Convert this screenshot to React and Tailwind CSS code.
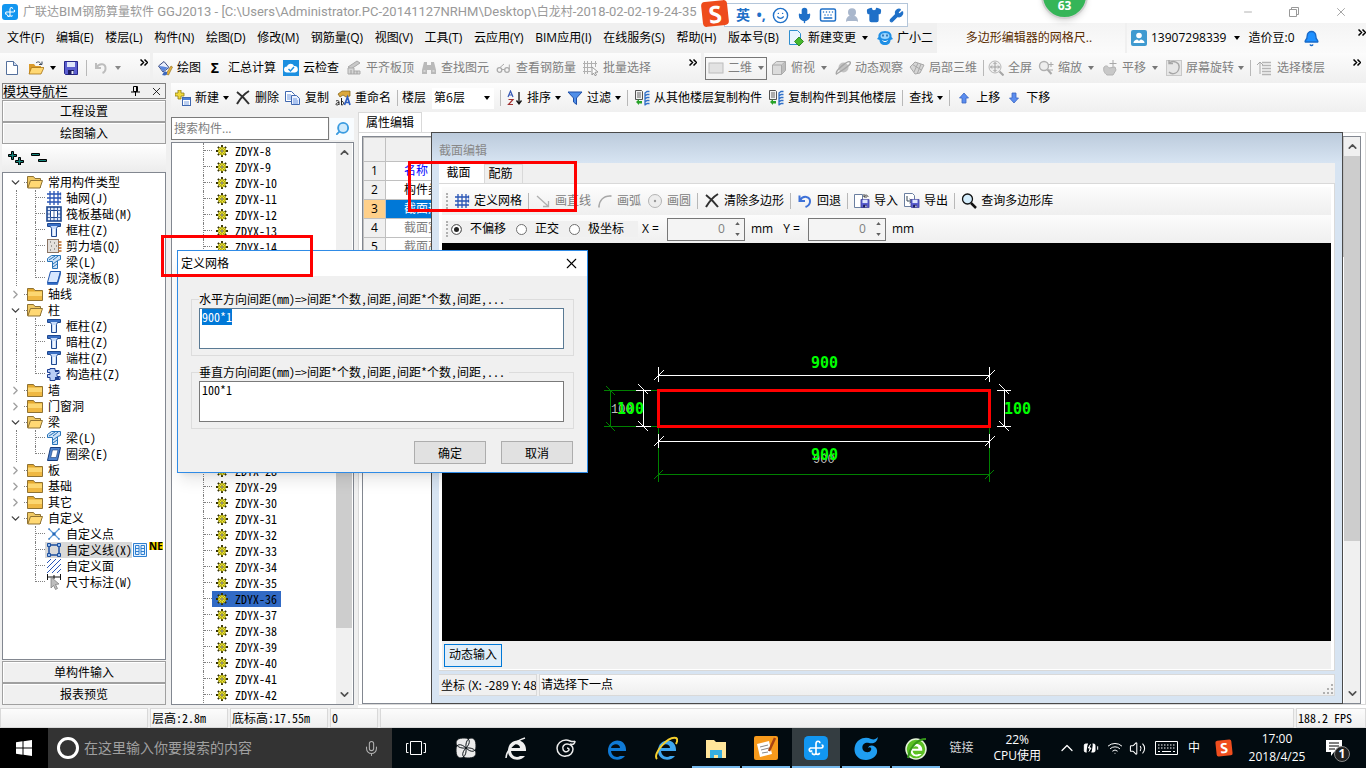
import { useEffect, useRef } from 'react'
import {
  ChevronDown, ChevronUp, ChevronRight, Keyboard, Mic, Minus, Shirt, Smile,
  Wrench, X, Search, Volume2, Wifi, Bell, BatteryCharging, UserRound,
} from 'lucide-react'

/* ---------- small drawings, all on a 16x16 grid ---------- */

function Svg({ children, size = 'h-4 w-4' }) {
  return (
    <svg viewBox="0 0 16 16" className={`${size} shrink-0`} fill="none" aria-hidden>
      {children}
    </svg>
  )
}

const floppy = (
  <>
    <path d="M1.5 1.5h13v13h-12l-1-1z" fill="#5b5fd0" stroke="#26268a" />
    <path d="M4 2h8v5H4z" fill="#dfe6fb" />
    <path d="M5 10h6v4.5H5z" fill="#1c1c60" />
    <path d="M8.5 11h2v3h-2z" fill="#e8ecff" />
  </>
)

const ICONS = {
  app: (
    <>
      <rect width="16" height="16" rx="3" fill="#1296f0" />
      <path d="M8 11.5V5.2C8 3 10.6 3 10.6 4.8M4 8h7.500M4 8c-1.300 1.800.5 3 1.400 1.700M11.500 8c1.500-.2 1.500-2 .2-2M8 11.500c-.8 1.500-2.600 1-2.500-.5M8 11.500c.8 1.300 2.300.9 2.300-.3" stroke="#fff" strokeWidth="1.100" />
    </>
  ),
  file: (
    <>
      <path d="M2.5 1.500h7l4 4v9h-11z" fill="#fff" stroke="#54709c" />
      <path d="M9.500 1.500v4h4" fill="#cfdcf2" stroke="#54709c" />
    </>
  ),
  open: (
    <>
      <path d="M1 4h5l1.5 2H13v8H1z" fill="#d99a2b" />
      <path d="M3.5 7.5H16L13 14H1z" fill="#ffd873" stroke="#a87414" strokeWidth=".8" />
      <path d="M8 3c2-2 4-1 5 1m1-2.500v3h-3" stroke="#3d4a5c" />
    </>
  ),
  save: floppy,
  undoGray: <path d="M3 3v5h5M3.5 7.5C6 3 13 3 12.5 9c-.2 2-1.500 3.500-3 4" stroke="#bdbdbd" strokeWidth="2" />,
  draw: (
    <>
      <path d="M1.5 6L7 1.5l5 6L6 12z" fill="#e9eefb" stroke="#3a4a80" />
      <path d="M2 6l4 .5 5 1-5 4z" fill="#5a86dd" />
      <path d="M9 14l5-8 1.5 1-4 8z" fill="#e8b53b" stroke="#8c6410" strokeWidth=".6" />
      <path d="M7 12c2-1 4 0 3 2s-3 1.500-5 1c1-1 1-2 2-3z" fill="#3e68bd" />
    </>
  ),
  cloud: (
    <>
      <rect width="16" height="16" fill="#1b8fe0" />
      <path d="M4 12.500a3 3 0 010-6C5 3 10 3 11 6a3 3 0 011 6.500z" fill="#fff" />
      <path d="M5.500 9l2 2 3.500-4" stroke="#1b8fe0" strokeWidth="1.500" />
    </>
  ),
  flush: (
    <>
      <path d="M2 7l9-6 3 2-9 6z" fill="#c9c9c9" stroke="#a8a8a8" />
      <path d="M2 8v6h12v-3H8V8z" fill="#d6d6d6" stroke="#ababab" />
      <path d="M5 10v4M8 11v3M11 11v3" stroke="#a0a0a0" />
    </>
  ),
  binoculars: (
    <>
      <path d="M3 2h3v3h4V2h3l2 8v4h-5v-4H6v4H1v-4z" fill="#b9b9b9" />
      <path d="M2.500 11h2M11.500 11h2" stroke="#eee" />
    </>
  ),
  glasses: (
    <>
      <circle cx="3.500" cy="10" r="2.300" stroke="#ababab" strokeWidth="1.300" />
      <circle cx="11" cy="10" r="2.300" stroke="#ababab" strokeWidth="1.300" />
      <path d="M6 9.500h2.500M4 7.500l4-3.500M13.300 9.500V4.500" stroke="#ababab" />
    </>
  ),
  batch: (
    <>
      <path d="M1.500 1v13M4.500 1v13M8.500 1v6M12.500 1v6M0 3.500h14M0 7.500h9M0 11.500h8" stroke="#b0b0b0" />
      <path d="M9 7l6 5-3 .3 1.500 2.700-1.500.7L10.500 13 9 15z" fill="#fff" stroke="#999" />
    </>
  ),
  plane2d: <rect x="1" y="3" width="14" height="10" fill="#e2e2e2" stroke="#bcbcbc" />,
  cube: (
    <>
      <path d="M1.500 5l4-3.500h9v9l-4 4h-9z" fill="#dcdcdc" stroke="#aaa" />
      <path d="M1.500 5h9v9.500M10.500 5l4-3.500" stroke="#aaa" />
      <path d="M11 5.500l3-3v8l-3 3z" fill="#bdbdbd" />
    </>
  ),
  orbit: (
    <>
      <circle cx="8.500" cy="7.500" r="5" fill="#c2c2c2" />
      <path d="M1.500 14C-.5 11 13 0 15 2s-4 6-13.500 12z" stroke="#a6a6a6" strokeWidth="1.400" />
    </>
  ),
  part3d: (
    <>
      <path d="M1 7l5-5 9 3-4 8-5 1z" fill="#d5d5d5" stroke="#a8a8a8" />
      <path d="M3.500 4.500l9 5.500M9 3l-4 9M12 4l-3.500 9" stroke="#a8a8a8" />
    </>
  ),
  fit: (
    <>
      <circle cx="7" cy="7" r="6" fill="#eee" stroke="#b8b8b8" />
      <path d="M7 2.500v9M2.500 7h9M5.500 4L7 2.500 8.500 4M5.500 10L7 11.500 8.500 10M4 5.500L2.500 7 4 8.500M10 5.500L11.500 7 10 8.500" stroke="#a0a0a0" />
      <path d="M11.500 11.500l4 4" stroke="#a6a6a6" strokeWidth="2" />
    </>
  ),
  zoom: (
    <>
      <circle cx="6" cy="6" r="4.500" fill="#eee" stroke="#b0b0b0" strokeWidth="1.400" />
      <path d="M9.500 9.500l4 4.500" stroke="#aaa" strokeWidth="2" />
      <path d="M13 2v5M10.500 4.500h5M11 10h4" stroke="#aaa" />
    </>
  ),
  pan: (
    <>
      <path d="M2 7c2-2 4-1 5 1l6-1 1 3-3 5H5c-3-2-4-5-3-8z" fill="#c8c8c8" stroke="#b3b3b3" />
      <path d="M11 0v7M7.500 3.500h7" stroke="#a8a8a8" />
    </>
  ),
  rotate: (
    <>
      <rect x=".5" y=".5" width="15" height="15" fill="#e6e6e6" stroke="#c8c8c8" />
      <path d="M3 3c4-3 11-1 10 5s-7 7-10 4M3 0v3.500h4" stroke="#a6a6a6" strokeWidth="1.400" />
    </>
  ),
  floors: (
    <>
      <path d="M5 2.500h9M5 5.500h9M5 8.500h9M5 11.500h9M5 14.500h9" stroke="#b5b5b5" strokeWidth="1.500" />
      <path d="M0 5l3-3 3 3M3 3v11" stroke="#a8a8a8" />
    </>
  ),
  add: (
    <>
      <path d="M3 0h3v3h3v3H6v3H3V6H0V3h3z" fill="#f0d93c" stroke="#8d7b12" strokeWidth=".8" />
      <rect x="7.500" y="7.500" width="8" height="8" fill="#fff" stroke="#4068b0" />
      <path d="M8 8h7v2H8z" fill="#4d80d8" />
      <path d="M9 12h5M9 14h5" stroke="#7ba0e0" />
    </>
  ),
  del: <path d="M2 2c4 3 8 7 12 12M14 1C9 4 5 9 2 14" stroke="#303030" strokeWidth="2" />,
  copy: (
    <>
      <path d="M.5 1.500h6l3 3v7h-9z" fill="#fff" stroke="#4068b0" />
      <path d="M2 5h4M2 7h4M2 9h4" stroke="#6b95e0" />
      <path d="M6.500 5.500h5l3 3v6h-8z" fill="#eaf1ff" stroke="#4068b0" />
      <path d="M8 9h4M8 11h5M8 13h5" stroke="#6b95e0" />
    </>
  ),
  rename: (
    <>
      <path d="M3 4l4-3h8v5l-4 1-3-2-3 2z" fill="#dba83c" stroke="#7b5b13" strokeWidth=".7" />
      <path d="M1 11c2-1 3 0 3 1v3M4 12.500c-3 0-4 2.500-2 2.500 1 0 2-1 2-1M6.500 8v7c3 0 3-4 0-3.500" stroke="#222" />
      <path d="M9.500 15l3-8 2.500 8M10.500 12.500h4" stroke="#2d5dc0" strokeWidth="1.700" />
    </>
  ),
  sort: (
    <>
      <path d="M1 7l2.500-6L6 7M2 5h3" stroke="#3558b5" strokeWidth="1.200" />
      <path d="M1.500 9.500H6l-4.500 5H6" stroke="#a03030" strokeWidth="1.200" />
      <path d="M12 2v11M9.500 10.500L12 14l2.500-3.500" stroke="#111" strokeWidth="1.300" />
    </>
  ),
  filter: <path d="M1 2h14L9.500 8v6.500L6.500 12V8z" fill="#4f8ee8" stroke="#1e4fa8" />,
  floorCopy: (
    <>
      <path d="M1.500.5h6l1 1v8h-7z" fill="#f2f2f2" stroke="#555" />
      <path d="M3 3h4M3 5h4M3 7h4" stroke="#666" />
      <path d="M11 3l2-1.500h2.500M11 6l2-1.500h2.500M11 9l2-1.500h2.500M11 12l2-1.500h2.500M11 15l2-1.500h2.500M11 2.500v13" stroke="#2f6fc8" strokeWidth="1.300" />
      <path d="M2 12l3-3v2h3v2.500H5V15z" fill="#29a329" />
    </>
  ),
  up: <path d="M8 3l4.500 5H10v5H6V8H3.500z" fill="#5b8def" stroke="#3a66c0" strokeWidth=".8" />,
  down: <path d="M8 13L3.500 8H6V3h4v5h2.500z" fill="#5b8def" stroke="#3a66c0" strokeWidth=".8" />,
  change: (
    <>
      <path d="M1.500.5h8l3 3v11h-11z" fill="#eaf5ff" stroke="#2f8ecf" />
      <path d="M11 7l4.500 4.500L11 16l-4.500-4.500z" fill="#46b82d" stroke="#1f7a12" strokeWidth=".8" />
    </>
  ),
  mascot: (
    <>
      <path d="M8 1c5 0 7 3 6.500 6l1.500 2-2.500 1c0 3-2 5-5.500 5s-5.500-2-5.500-5L0 9l1.500-2C1 4 3 1 8 1z" fill="#1f8fe5" />
      <ellipse cx="8" cy="6" rx="4.500" ry="3" fill="#9ad6ff" />
      <path d="M6 4.500v2M10 4.500v2" stroke="#0b4d91" strokeWidth="1.300" />
      <path d="M5.500 10.500c1.500 1.500 3.500 1.500 5 0" stroke="#fff" />
    </>
  ),
  user: (
    <>
      <rect width="16" height="16" rx="2" fill="#3f9ad0" />
      <circle cx="8" cy="5.500" r="2.800" fill="#fff" />
      <path d="M2.500 13c0-5 11-5 11 0z" fill="#fff" />
      <path d="M6 9h4l-2 2z" fill="#3f9ad0" />
    </>
  ),
  folder: (
    <>
      <path d="M.5 2.500h6l1.500 2h7.500v10H.5z" fill="#e3a92f" stroke="#8f7233" />
      <path d="M1 5.500h14V14H1z" fill="#fcd771" />
      <path d="M1 10h14v4H1z" fill="#efb843" />
    </>
  ),
  folderOpen: (
    <>
      <path d="M.5 2.500h6l1.500 2h5.500v9H.5z" fill="#f0c964" stroke="#8f7233" />
      <path d="M3.500 6.500h12L13 14H.8z" fill="#ffd873" stroke="#8f7233" />
    </>
  ),
  grid: <path d="M4 1v14M8 1v14M12 1v14M1 4h14M1 8h14M1 12h14M14.500 2.500v3M14.500 6.500v3" stroke="#2955b5" strokeWidth="1.300" />,
  raft: (
    <>
      <rect x="1" y="1" width="14" height="14" fill="#dfe9fb" stroke="#1d4790" strokeWidth="1.600" />
      <path d="M4.500 4.500h7v7h-7z" fill="#fff" stroke="#1d4790" />
      <path d="M8 4v8M1 4.500h3M1 8h3M1 11.500h3M12 4.500h3M12 8h3M12 11.500h3M4.500 1v3M8 1v3M11.500 1v3M4.500 12v3M8 12v3M11.500 12v3" stroke="#1d4790" strokeWidth=".8" />
    </>
  ),
  column: (
    <>
      <path d="M1.500 1.500h13v3h-3l-1 2v8h-5v-8l-1-2h-3z" fill="#c8dcfb" stroke="#1d4790" />
      <path d="M2 2h12v2H2z" fill="#3a6fc4" />
      <path d="M8 7v7" stroke="#fff" strokeWidth="1.500" />
    </>
  ),
  wall: (
    <>
      <rect x="1.500" y="1.500" width="11" height="13" fill="#e4e0dc" stroke="#8a7464" />
      <path d="M4 4h1M8 5h1M5 8h1M10 8h1M4 12h1M8 11h1" stroke="#555" />
      <path d="M12.500 4h3M12.500 7h3M12.500 10h3M12.500 13h3" stroke="#c06a22" strokeWidth="1.500" />
    </>
  ),
  beam: (
    <>
      <path d="M1.500 4.500l4-3h9v4l-3 1v8h-5v-7h-5z" fill="#cfe3f8" stroke="#2673b8" />
      <path d="M3 6l6-4M7 6l5-4M7 10l4-3M7 13l4-3" stroke="#2673b8" />
    </>
  ),
  slab: (
    <>
      <path d="M4.500 1.500h10l-3 11h-10z" fill="#d7e7ff" stroke="#1f55ad" />
      <path d="M1.500 12.500h10l3-11v3l-3 10h-10z" fill="#2c69c8" stroke="#1f55ad" strokeWidth=".6" />
    </>
  ),
  ring: (
    <>
      <path d="M4.500 1.500h10l-3 13h-10z" fill="#4d83cf" stroke="#173c7b" />
      <path d="M6.500 4H12l-1.800 7.500H4.700z" fill="#fff" stroke="#173c7b" strokeWidth=".6" />
    </>
  ),
  tie: (
    <>
      <path d="M4 2.500h5v2h4v3h-2v3h3v3H9v1H4v-3H1.500v-3H4v-2H1.500v-3H4z" fill="#b9cdf5" stroke="#1d3f92" />
      <path d="M9 5h3M9 12h4" stroke="#1d3f92" strokeWidth="2" />
    </>
  ),
  point: (
    <>
      <path d="M3 3l10 10M3 13L13 3" stroke="#5a9ad8" strokeWidth="1.200" />
      <path d="M2 3h2M12 3h2M2 13h2M12 13h2" stroke="#2468b8" />
      <rect x="6.500" y="6.500" width="3" height="3" fill="#2468b8" />
    </>
  ),
  line: (
    <>
      <path d="M3 3h10v10H3z" stroke="#1d4f9f" strokeWidth="1.500" />
      <path d="M1.500 1.500h3v3h-3zM11.500 1.500h3v3h-3zM1.500 11.500h3v3h-3zM11.500 11.500h3v3h-3z" fill="#9cc2f0" stroke="#1d4f9f" />
    </>
  ),
  face: <path d="M1 5l4-4M1 10l9-9M1 15L15 1M6 15l9-9M11 15l4-4" stroke="#2955b5" />,
  dim: (
    <>
      <path d="M1 3h14M1.500 0v6M14.500 0v6M8 1v4" stroke="#111" />
      <path d="M5 3l8 7-3.500.5 2 4-2 1-2-4L5 14z" fill="#bdbdbd" stroke="#777" strokeWidth=".7" />
    </>
  ),
  gear: (
    <>
      <path d="M8 0v16M0 8h16M2.500 2.500l11 11M13.500 2.500l-11 11" stroke="#333000" strokeWidth="2.500" />
      <circle cx="8" cy="8" r="5.500" fill="#f4ec2c" />
      <circle cx="8" cy="8" r="4.300" stroke="#55500a" strokeWidth="1.300" strokeDasharray="2 1.400" />
      <circle cx="8" cy="8" r="1.600" fill="#fff" stroke="#333000" />
    </>
  ),
  lineTool: <path d="M2 3l11 10M13.500 8v5.500H8" stroke="#b0b0b0" strokeWidth="1.300" />,
  arc: (
    <>
      <path d="M2 14C2 8 6 3 13 3" stroke="#a8a8a8" strokeWidth="1.300" />
      <path d="M1 12.500h2v2H1zM12.500 2h2v2h-2z" fill="#b5b5b5" />
    </>
  ),
  circle: (
    <>
      <circle cx="8" cy="8" r="6.500" fill="#ededed" stroke="#b4b4b4" />
      <circle cx="8" cy="8" r="1.200" fill="#999" />
    </>
  ),
  undo: <path d="M2.500 2.500v5.500H8M3 7.500C6 2 13.500 3 13 9c-.3 2.500-2 4-4.500 5" stroke="#3f72d8" strokeWidth="2" />,
  imp: (
    <>
      <path d="M.5 1.500h8v13h-8z" fill="#fff" stroke="#6a7ea0" />
      <path d="M10 4c1-3 4-2 4 0M10 1v3h3" stroke="#444" />
      <svg x="6" y="5.500" width="10" height="10" viewBox="0 0 16 16">{floppy}</svg>
    </>
  ),
  exp: (
    <>
      <path d="M.5.5h8l2 2v11H.5z" fill="#fff" stroke="#6a7ea0" />
      <path d="M3 3v5h4M5.500 6L8 8l-2.500 2" stroke="#345" />
      <svg x="6" y="5.500" width="10" height="10" viewBox="0 0 16 16">{floppy}</svg>
    </>
  ),
  query: (
    <>
      <circle cx="6.500" cy="6" r="5" fill="#d3ecfb" stroke="#111" strokeWidth="1.300" />
      <path d="M10 10l5 5" stroke="#111" strokeWidth="2.500" />
    </>
  ),
}

function Icon({ name, size }) {
  return <Svg size={size}>{ICONS[name]}</Svg>
}

function Caret({ className = 'text-black' }) {
  return (
    <svg viewBox="0 0 6 4" className={`h-1 w-1.5 shrink-0 ${className}`} aria-hidden>
      <path d="M0 0h6L3 4z" fill="currentColor" />
    </svg>
  )
}

function Sep() {
  return <span className="h-4 w-px shrink-0 bg-[#b8b8b8]" />
}

function Tool({ icon, label, muted, caret }) {
  return (
    <button type="button" className={`flex shrink-0 items-center gap-1 ${muted ? 'text-[#808080]' : 'text-black'}`}>
      {icon && <Icon name={icon} />}
      <span>{label}</span>
      {caret && <Caret className={muted ? 'text-[#777]' : 'text-black'} />}
    </button>
  )
}

function More() {
  return (
    <svg viewBox="0 0 8 7" className="mt-[6px] h-[7px] w-2 shrink-0 self-start" fill="none" stroke="#000" strokeWidth="1.500" aria-hidden>
      <path d="M.5.500l3 3-3 3M4.500.500l3 3-3 3" />
    </svg>
  )
}

/* ---------- title and menus ---------- */

const MENUS = [
  '文件(F)', '编辑(E)', '楼层(L)', '构件(N)', '绘图(D)', '修改(M)', '钢筋量(Q)', '视图(V)',
  '工具(T)', '云应用(Y)', 'BIM应用(I)', '在线服务(S)', '帮助(H)', '版本号(B)',
]

function TitleBar() {
  return (
    <header className="flex h-[23px] shrink-0 items-center bg-white pl-0.5 text-[#999]">
      <Icon name="app" />
      <h1 className="ml-[5px] flex-1 overflow-hidden [font-family:Roboto,'Noto_Sans_CJK_SC',sans-serif] text-[13px] leading-5 whitespace-nowrap">
        <span className="text-xs">广联达</span>BIM<span className="text-xs">钢筋算量软件</span>
        {' GGJ2013 - [C:\\Users\\Administrator.PC-20141127NRHM\\Desktop\\'}
        <span className="text-xs">白龙村</span>-2018-02-02-19-24-35
      </h1>
      <div className="flex items-center gap-[34px] pr-[18px]">
        <button type="button" aria-label="最小化"><Minus size={12} strokeWidth={1.5} /></button>
        <button type="button" aria-label="还原">
          <svg viewBox="0 0 12 12" className="h-3 w-3" fill="none" stroke="currentColor">
            <path d="M3.500 3V1.500h7v7H9M1.500 3.500h7v7h-7z" />
          </svg>
        </button>
        <button type="button" aria-label="关闭"><X size={14} strokeWidth={1.5} /></button>
      </div>
    </header>
  )
}

function MenuBar() {
  return (
    <nav className="flex h-[30px] shrink-0 items-center bg-[#f0f0f0]">
      <div className="flex flex-1 items-center gap-[9px] pl-[7px]">
        <div className="flex w-[772px] shrink-0 justify-between">
          {MENUS.map((m) => <button key={m} type="button" className="shrink-0">{m}</button>)}
        </div>
        <button type="button" className="flex shrink-0 items-center gap-1">
          <Icon name="change" />新建变更<Caret className="ml-0.5 text-black" />
        </button>
        <Tool icon="mascot" label="广小二" />
      </div>
      <div className="flex h-full w-[188px] shrink-0 items-center justify-center bg-linear-to-b from-[#f4f4f4] to-[#fbfbfb] pr-1 text-[#5a2c00]">
        多边形编辑器的网格尺..
      </div>
      <div className="ml-0.5 flex h-full w-[239px] shrink-0 items-center gap-1 bg-linear-to-b from-[#f4f4f4] to-[#fbfbfb] pl-1">
        <Icon name="user" />
        <span>13907298339</span>
        <Caret className="mx-1 text-black" />
        <span>造价豆:0</span>
        <Bell size={17} className="ml-1 fill-[#1e90ff] text-[#1769c8]" />
        <span className="flex-1" />
        <More />
      </div>
    </nav>
  )
}

function MainToolbar() {
  return (
    <div className="flex h-[30px] shrink-0 gap-[3px] bg-[#f0f0f0]">
      <div className="flex w-[150px] shrink-0 items-center bg-linear-to-b from-[#fcfcfc] to-[#efefef] pl-1">
        <button type="button" aria-label="新建"><Icon name="file" /></button>
        <button type="button" aria-label="打开" className="ml-2 flex items-center gap-1.5"><Icon name="open" /><Caret /></button>
        <button type="button" aria-label="保存" className="mx-[7px]"><Icon name="save" /></button>
        <Sep />
        <button type="button" aria-label="撤销" className="ml-1.5 flex items-center gap-1.5">
          <Icon name="undoGray" /><Caret className="text-[#888]" />
        </button>
        <span className="flex-1" />
        <More />
        <span className="w-0.5" />
      </div>
      <div className="flex flex-1 items-center gap-[7px] bg-linear-to-b from-[#fcfcfc] to-[#efefef] pr-1 pl-1">
        <Tool icon="draw" label="绘图" />
        <button type="button" className="flex items-center gap-2 pl-0.5">
          <span className="w-2.5 text-sm leading-4 font-bold">Σ</span>汇总计算
        </button>
        <Tool icon="cloud" label="云检查" />
        <Tool icon="flush" label="平齐板顶" muted />
        <Tool icon="binoculars" label="查找图元" muted />
        <Tool icon="glasses" label="查看钢筋量" muted />
        <Tool icon="batch" label="批量选择" muted />
        <span className="flex-1" />
        <More />
      </div>
      <div className="flex w-[662px] shrink-0 items-center gap-[6px] bg-linear-to-b from-[#fcfcfc] to-[#efefef] pr-[5px] pl-px">
        <button type="button" className="-mr-0.5 flex h-[23px] w-[62px] shrink-0 items-center gap-1 border border-[#777] pl-0.5 text-[#808080]">
          <Icon name="plane2d" />二维<Caret className="ml-0.5 text-[#777]" />
        </button>
        <button type="button" className="flex items-center gap-1 text-[#808080]">
          <Icon name="cube" />俯视<Caret className="mx-0.5 text-[#777]" />
        </button>
        <Tool icon="orbit" label="动态观察" muted />
        <Tool icon="part3d" label="局部三维" muted />
        <Sep />
        <div className="-ml-0.5 flex items-center gap-[6px]">
          <Tool icon="fit" label="全屏" muted />
          <button type="button" className="flex items-center gap-1 text-[#808080]">
            <Icon name="zoom" />缩放<Caret className="mx-0.5 text-[#777]" />
          </button>
          <button type="button" className="flex items-center gap-1 text-[#808080]">
            <Icon name="pan" />平移<Caret className="mx-0.5 text-[#777]" />
          </button>
          <Tool icon="rotate" label="屏幕旋转" muted caret />
        </div>
        <Sep />
        <Tool icon="floors" label="选择楼层" muted />
        <span className="flex-1" />
        <More />
      </div>
    </div>
  )
}

/* ---------- left navigation ---------- */

const NAV = [
  { name: '常用构件类型', open: true, items: [['grid', '轴网(J)'], ['raft', '筏板基础(M)'], ['column', '框柱(Z)'], ['wall', '剪力墙(Q)'], ['beam', '梁(L)'], ['slab', '现浇板(B)']] },
  { name: '轴线' },
  { name: '柱', open: true, items: [['column', '框柱(Z)'], ['column', '暗柱(Z)'], ['column', '端柱(Z)'], ['tie', '构造柱(Z)']] },
  { name: '墙' },
  { name: '门窗洞' },
  { name: '梁', open: true, items: [['beam', '梁(L)'], ['ring', '圈梁(E)']] },
  { name: '板' },
  { name: '基础' },
  { name: '其它' },
  { name: '自定义', open: true, items: [['point', '自定义点'], ['line', '自定义线(X)'], ['face', '自定义面'], ['dim', '尺寸标注(W)']] },
]

const DOTS = 'border-dotted border-[#808080]'

function NavLeaf({ icon, label, last, tail }) {
  const active = label === '自定义线(X)'
  return (
    <li className="flex h-4 items-center">
      <span className={`ml-[13px] w-[19px] self-stretch ${tail ? '' : `border-l ${DOTS}`}`} />
      <span className={`w-[10px] shrink-0 self-stretch ${last ? '' : `border-l ${DOTS}`}`}>
        <span className={`block h-2 border-b ${last ? 'border-l' : ''} ${DOTS}`} />
      </span>
      <span className={`flex h-4 items-center gap-1 pl-px ${active ? 'bg-[#d9d9d9]' : ''}`}>
        <Icon name={icon} />{label}
      </span>
      {active && (
        <>
          <svg viewBox="0 0 14 14" className="ml-px h-3.5 w-3.5 shrink-0" fill="none" stroke="#2f7fd0" aria-hidden>
            <path d="M.5.5h13v13H.5z" fill="#e5f2ff" />
            <path d="M2.500 2.500h3.500v9H2.500zM8 2.500h3.500v9H8zM2.500 5.500H6M2.500 8.500H6M8 5.500h3.500M8 8.500h3.500" />
          </svg>
          <span className="ml-0.5 self-start bg-[#ffd800] font-sans text-[10px] leading-2 font-bold">NE</span>
        </>
      )}
    </li>
  )
}

const BAR_BTN = 'h-[22px] w-full shrink-0 border border-[#a0a0a0] bg-[#f0f0f0] shadow-[inset_1px_1px_0_#fff]'

function NavPanel() {
  return (
    <aside className="[font-family:'Noto_Sans_CJK_SC',sans-serif] [font-feature-settings:'hwid'] flex w-[167px] shrink-0 flex-col pr-px pb-[3px] pl-0.5">
      <div className="flex h-[16px] shrink-0 items-center border border-[#808080] pr-0.5">
        <h2 className="flex-1 text-[13px] leading-3">模块导航栏</h2>
        <svg viewBox="0 0 9 10" className="mr-2.5 h-2.5 w-[9px]" fill="none" stroke="#000" aria-label="固定">
          <path d="M2.500.500h4v5h-4zM5.500 1v4M0 6h9M4.500 6v4" />
        </svg>
        <X size={13} strokeWidth={1.5} />
      </div>
      <button type="button" className={`mt-px ${BAR_BTN}`}>工程设置</button>
      <button type="button" className={BAR_BTN}>绘图输入</button>
      <div className="flex h-7 shrink-0 items-center bg-linear-to-b from-white to-[#ececec] pl-[6px]">
        <button type="button" aria-label="全部展开">
          <svg viewBox="0 0 40 14" className="h-3.5 w-10" aria-hidden>
            <path d="M3.500.500h2v3h3v2h-3v3h-2v-3h-3v-2h3zM10.500 6.500h2v3h3v2h-3v2.500h-2v-2.500h-3v-2h3zM23.500 2.500h8v2h-8zM30.500 8.500h8v2h-8z" fill="#15847c" stroke="#000" />
          </svg>
        </button>
      </div>
      <ul className="min-h-0 flex-1 overflow-hidden border border-[#828790] bg-white pt-px">
        {NAV.map((group, gi) => (
          <li key={group.name}>
            <div className="flex h-4 items-center">
              <span className="flex w-[21px] justify-end pr-[2px]">
                {group.open
                  ? <ChevronDown size={13} strokeWidth={2.5} className="text-[#404040]" />
                  : <ChevronRight size={13} strokeWidth={2.5} className="text-[#a0a0a0]" />}
              </span>
              <span className={`w-[3px] border-t ${DOTS}`} />
              <Icon name={group.open ? 'folderOpen' : 'folder'} />
              <span className="ml-[5px]">{group.name}</span>
            </div>
            {group.items && (
              <ul>
                {group.items.map(([icon, label], i) => (
                  <NavLeaf key={label} icon={icon} label={label} last={i === group.items.length - 1} tail={gi === NAV.length - 1} />
                ))}
              </ul>
            )}
          </li>
        ))}
      </ul>
      <button type="button" className={`mt-px ${BAR_BTN}`}>单构件输入</button>
      <button type="button" className={BAR_BTN}>报表预览</button>
    </aside>
  )
}

/* ---------- component list ---------- */

function Scrollbar({ children }) {
  return (
    <div className="flex w-4 shrink-0 flex-col items-center bg-[#f0f0f0] text-[#505050]">
      <ChevronUp size={13} strokeWidth={3} className="my-[3px] shrink-0" />
      <div className="flex w-full flex-1 flex-col">{children}</div>
      <ChevronDown size={13} strokeWidth={3} className="my-[3px] shrink-0" />
    </div>
  )
}

const PARTS = Array.from({ length: 35 }, (_, i) => `ZDYX-${i + 8}`)

function PartList() {
  return (
    <section className="flex w-[183px] shrink-0 flex-col pt-[5px] pb-[3px]">
      <div className="mb-0.5 flex h-[23px] shrink-0 items-center">
        <input
          aria-label="搜索构件"
          placeholder="搜索构件..."
          className="h-[23px] w-[158px] border border-[#7a7a7a] bg-white px-0.5 text-xs placeholder:text-[#808080]"
        />
        <button type="button" aria-label="搜索" className="ml-px grid h-[22px] w-6 place-items-center bg-[#f8fcff] text-[#3a9be0]">
          <Search size={15} strokeWidth={3} className="-scale-x-100 fill-[#cfeafc]" />
        </button>
      </div>
      <div className="flex min-h-0 flex-1 border border-[#828790] bg-white pr-px">
        <ul className="[font-family:'Noto_Sans_CJK_SC',sans-serif] [font-feature-settings:'hwid'] min-w-0 flex-1 overflow-hidden">
          {PARTS.map((p) => (
            <li key={p} className="flex h-4 items-center pl-[31px]">
              <span className={`w-[9px] self-stretch border-l ${DOTS}`}>
                <span className={`block h-2 border-b ${DOTS}`} />
              </span>
              <span className={`flex h-4 items-center gap-[7px] pr-1 pl-[4px] ${p === 'ZDYX-36' ? 'bg-[#316ac5]' : ''}`}>
                <Icon name="gear" size="h-3 w-3" />{p}
              </span>
            </li>
          ))}
        </ul>
        <Scrollbar>
          <span className="grow-[48]" />
          <span className="grow-[42] bg-[#cdcdcd]" />
          <span className="grow-[11]" />
        </Scrollbar>
      </div>
    </section>
  )
}

function PartToolbar() {
  return (
    <div className="flex h-7 shrink-0 items-center gap-[6px] bg-linear-to-b from-[#fdfdfd] to-[#f0f0f0] pt-0.5 pl-1">
      <Tool icon="add" label="新建" caret />
      <Tool icon="del" label="删除" />
      <Tool icon="copy" label="复制" />
      <Tool icon="rename" label="重命名" />
      <Sep />
      <label className="-ml-0.5 flex items-center gap-1.5">
        楼层
        <span className="flex h-[21px] w-[62px] items-center bg-white">
          <select className="w-full appearance-none bg-transparent pl-0.5" defaultValue="6">
            <option value="6">第6层</option>
          </select>
          <Caret className="mr-1 text-black" />
        </span>
      </label>
      <Sep />
      <Tool icon="sort" label="排序" caret />
      <Tool icon="filter" label="过滤" caret />
      <Sep />
      <Tool icon="floorCopy" label="从其他楼层复制构件" />
      <Tool icon="floorCopy" label="复制构件到其他楼层" />
      <Sep />
      <Tool label="查找" caret />
      <Sep />
      <Tool icon="up" label="上移" />
      <Tool icon="down" label="下移" />
    </div>
  )
}

/* ---------- property table and section editor ---------- */

const PROPS = [
  { name: '名称', num: 'bg-[#f0f0f0]', cell: 'text-[#0000ff]' },
  { name: '构件类型', num: 'bg-[#f0f0f0]', cell: 'text-black' },
  { name: '截面形状', num: 'bg-[#ffd08a]', cell: 'bg-[#0078d7] text-white' },
  { name: '截面宽度', num: 'bg-[#f0f0f0]', cell: 'text-[#808080]' },
  { name: '截面高度', num: 'bg-[#f0f0f0]', cell: 'text-[#808080]' },
]

function PropertyTable() {
  return (
    <table className="w-full table-fixed border-collapse">
      <thead>
        <tr className="h-6">
          <th className="w-[22px] border border-[#c0c0c0] bg-[#f0f0f0]" aria-label="序号" />
          <th className="border border-[#c0c0c0] bg-[#f0f0f0]" aria-label="属性名称" />
        </tr>
      </thead>
      <tbody>
        {PROPS.map((p, i) => (
          <tr key={p.name} className="h-[19px]">
            <td className={`border border-[#c0c0c0] text-center leading-4 ${p.num}`}>{i + 1}</td>
            <td className={`border border-[#c0c0c0] pl-[18px] leading-4 ${p.cell}`}>{p.name}</td>
          </tr>
        ))}
      </tbody>
    </table>
  )
}

function Grip() {
  return <span className="h-4 w-0.5 shrink-0 border-l-2 border-dotted border-[#b0b0b0]" />
}

function Offset({ label }) {
  return (
    <label className="flex items-center gap-[6px]">
      <span className="mr-0.5">{label} =</span>
      <span className="flex h-[23px] w-[78px] items-center border border-[#777] bg-[#f4f4f4] pr-1">
        <input defaultValue="0" className="w-0 flex-1 bg-transparent pr-2.5 text-right text-[#808080]" />
        <span className="flex flex-col gap-2 text-[#606060]">
          <svg viewBox="0 0 6 4" className="h-[3px] w-[5px]"><path d="M0 4h6L3 0z" fill="currentColor" /></svg>
          <svg viewBox="0 0 6 4" className="h-[3px] w-[5px]"><path d="M0 0h6L3 4z" fill="currentColor" /></svg>
        </span>
      </span>
      mm
    </label>
  )
}

function Drawing() {
  return (
    <svg className="min-h-0 w-full flex-1 bg-black" fill="none" aria-label="截面图">
      {/* reference grid */}
      <g stroke="#008000">
        <path d="M162 147.500h53M162 183.500h53M168.500 147v37M164 143l9 9M164 179l9 9" />
        <path d="M216.500 185v54M547.500 185v54M216 231.500h332M212 236l9-9M543 236l9-9" />
      </g>
      <g fill="#c0c0c0" className="[font-family:'Liberation_Mono',monospace] text-xs">
        <text x="169" y="170">100</text>
        <text x="371" y="220">900</text>
      </g>
      {/* dimensions */}
      <g stroke="#fff">
        <path d="M216 132.500h332M216.500 124v15M547.500 124v15M212 137l10-10M543 137l10-10" />
        <path d="M216 198.500h332M216.500 191v14M547.500 191v14M212 203l10-10M543 203l10-10" />
        <path d="M201.500 147v37M194 147.500h15M194 183.500h15M196 141l10 10M196 178l10 10" />
        <path d="M562.500 147v37M555 147.500h14M555 183.500h14M557 141l10 10M557 178l10 10" />
      </g>
      <rect x="216.500" y="147.500" width="331" height="36" stroke="#f00" strokeWidth="3" />
      <g fill="#0f0" className="[font-family:'DejaVu_Sans_Mono',monospace] text-[15px] font-bold">
        <text x="369" y="125">900</text>
        <text x="369" y="217">900</text>
        <text x="175" y="171">100</text>
        <text x="562" y="171">100</text>
      </g>
    </svg>
  )
}

function SectionEditor() {
  return (
    <section className="absolute -top-px right-[22px] bottom-0 left-[72px] flex flex-col border border-[#4a4a4a] bg-[#d7e4f2] px-[7px] pb-[7px]">
      <h2 className="-mx-[7px] h-[30px] shrink-0 bg-linear-to-b from-[#bccbdc] to-[#d7e4f2] pt-2.5 pl-[7px] leading-4 text-[#888]">截面编辑</h2>
      <div className="flex h-[21px] shrink-0 items-end border-b border-[#d9d9d9] bg-[#f0f0f0]">
        <button type="button" className="h-[21px] w-[45px] bg-white pr-1.5">截面</button>
        <button type="button" className="h-[19px] w-[39px] border border-b-0 border-[#d9d9d9] bg-[#f0f0f0] pr-1.5">配筋</button>
      </div>
      <div className="flex min-h-0 flex-1 flex-col border-r border-b border-[#d9d9d9] bg-white px-[3px] pt-[3px] pb-px">
        <div className="flex h-7 shrink-0 items-center gap-[6px] bg-linear-to-b from-[#fcfcfc] to-[#efefef] pl-1">
          <Grip />
          <Tool icon="grid" label="定义网格" />
          <Sep />
          <Tool icon="lineTool" label="画直线" muted />
          <Tool icon="arc" label="画弧" muted />
          <Tool icon="circle" label="画圆" muted />
          <Sep />
          <Tool icon="del" label="清除多边形" />
          <Sep />
          <Tool icon="undo" label="回退" />
          <Sep />
          <Tool icon="imp" label="导入" />
          <Tool icon="exp" label="导出" />
          <Sep />
          <Tool icon="query" label="查询多边形库" />
        </div>
        <div className="flex h-7 shrink-0 items-center bg-linear-to-b from-[#fcfcfc] to-[#efefef] pl-1">
          <Grip />
          <div className="flex items-center gap-[10px] bg-[#f0f0f0] pr-[14px] pl-[3px]">
            {['不偏移', '正交', '极坐标'].map((t, i) => (
              <label key={t} className="flex items-center gap-2">
                <input
                  type="radio"
                  name="offset"
                  defaultChecked={i === 0}
                  className="h-[11px] w-[11px] appearance-none rounded-full border border-[#707070] bg-white checked:bg-[#222] checked:shadow-[inset_0_0_0_2px_#fff]"
                />
                {t}
              </label>
            ))}
          </div>
          <span className="mr-1"><Sep /></span>
          <div className="flex items-center gap-[10px]">
            <Offset label="X" />
            <Offset label="Y" />
          </div>
        </div>
        <Drawing />
        <div className="flex h-7 shrink-0 items-center bg-[#f0f0f0] pl-0.5">
          <button type="button" className="h-[23px] w-[58px] border border-[#0078d7] bg-[#e1eef9]">动态输入</button>
        </div>
      </div>
      <footer className="mt-[3px] flex h-[22px] shrink-0 items-center gap-0.5 bg-[#f0f0f0]">
        <span className="h-full w-[98px] overflow-hidden border border-l-0 border-[#d9d9d9] [font-family:'Noto_Sans_CJK_SC',sans-serif] pl-0.5 leading-5 whitespace-nowrap">坐标 (X: -289 Y: 48</span>
        <span className="flex h-full flex-1 items-end border border-[#d9d9d9] bg-linear-to-b from-[#fcfcfc] to-[#efefef] pl-px leading-5">
          <span className="flex-1">请选择下一点</span>
          <svg viewBox="0 0 12 12" className="h-3 w-3" fill="#b0b0b0" aria-hidden>
            <path d="M9 1h2v2H9zM5 5h2v2H5zM9 5h2v2H9zM1 9h2v2H1zM5 9h2v2H5zM9 9h2v2H9z" />
          </svg>
        </span>
      </footer>
    </section>
  )
}

function PropertyPanel() {
  return (
    <section className="ml-1 flex min-w-0 flex-1 flex-col bg-white pb-[3px]">
      <div className="h-5 shrink-0">
        <button type="button" className="h-[21px] w-16 border border-b-0 border-[#d9d9d9] bg-white">属性编辑</button>
      </div>
      <div className="relative flex min-h-0 flex-1 border border-[#d9d9d9] p-[3px] pr-1 pb-0">
        <div className="flex min-w-0 flex-1 border border-[#828790]">
          <div className="min-w-0 flex-1"><PropertyTable /></div>
          <Scrollbar>
            <span className="grow-[73] bg-[#cdcdcd]" />
            <span className="grow-[27]" />
          </Scrollbar>
        </div>
        <SectionEditor />
      </div>
    </section>
  )
}

/* ---------- define-grid dialog ---------- */

function GridField({ id, label, value, inputRef }) {
  return (
    <fieldset className="h-[66px] border border-[#dcdcdc] pr-[9px] pb-1.5 pl-[7px]">
      <legend className="h-[18px] pr-1 leading-[18px] whitespace-nowrap"><label htmlFor={id}>{label}</label></legend>
      <textarea
        id={id}
        ref={inputRef}
        defaultValue={value}
        className="block h-[41px] w-full resize-none border border-[#7a7a7a] bg-white px-0.5 leading-4 outline-none selection:bg-[#0078d7] selection:text-white focus:border-[#5a7a94]"
      />
    </fieldset>
  )
}

function GridDialog() {
  const first = useRef(null)

  useEffect(() => {
    first.current.focus()
    first.current.select()
  }, [])

  return (
    <div role="dialog" aria-label="定义网格" className="absolute top-[250px] left-[177px] w-[411px] border border-[#2f8be6] bg-[#f0f0f0] pb-2 shadow-lg">
      <div className="flex h-[25px] items-center bg-white pr-[7px] pl-[3px]">
        <h2 className="flex-1">定义网格</h2>
        <button type="button" aria-label="关闭"><X size={17} strokeWidth={1.5} /></button>
      </div>
      <div className="[font-family:'Noto_Sans_CJK_SC',sans-serif] [font-feature-settings:'hwid'] flex flex-col gap-[7px] px-[13px] pt-[14px]">
        <GridField id="grid-x" label="水平方向间距(mm)=>间距*个数,间距,间距*个数,间距,..." value="900*1" inputRef={first} />
        <GridField id="grid-y" label="垂直方向间距(mm)=>间距*个数,间距,间距*个数,间距,..." value="100*1" />
        <div className="mt-[5px] flex justify-end gap-[15px] pr-px">
          <button type="button" className="h-[23px] w-[72px] border border-[#adadad] bg-[#e1e1e1]">确定</button>
          <button type="button" className="h-[23px] w-[72px] border border-[#adadad] bg-[#e1e1e1]">取消</button>
        </div>
      </div>
    </div>
  )
}

/* ---------- status bar and taskbar ---------- */

const PANE = 'h-full shrink-0 border border-[#d9d9d9] bg-linear-to-b from-[#fcfcfc] to-[#efefef] px-px leading-[18px] whitespace-nowrap'

function StatusBar() {
  return (
    <footer className="[font-family:'Noto_Sans_CJK_SC',sans-serif] [font-feature-settings:'hwid'] flex h-5 shrink-0 gap-0.5 bg-[#f0f0f0]">
      <span className={`w-[148px] ${PANE}`} />
      <span className={`w-[78px] ${PANE}`}>层高:2.8m</span>
      <span className={`w-[98px] ${PANE}`}>底标高:17.55m</span>
      <span className={`w-[48px] ${PANE}`}>0</span>
      <span className={`flex-1 ${PANE}`} />
      <span className={`w-[70px] ${PANE}`}>188.2 FPS</span>
    </footer>
  )
}

const eLogo = <path d="M6 17h15c1-14-18-14-18 0 0 10 13 11 17 5h-5c-3 2-8 1-9-5zm0-3c1-5 9-5 9 0z" transform="translate(1 -2)" />

const APPS = [
  { name: 'fan', run: false, art: <path d="M11 2c5 0 6 5 1 10C4 13 0 8 3 4c2-2 5-2 8-2zM22 11c0 5-5 6-10 1-1-8 4-12 8-9 2 2 2 5 2 8zM13 22c-5 0-6-5-1-10 8-1 12 4 9 8-2 2-5 2-8 2zM2 13c0-5 5-6 10-1 1 8-4 12-8 9-2-2-2-5-2-8z" fill="#ececec" stroke="#10171b" /> },
  { name: 'browser', run: false, art: <><g fill="#f0f0f0">{eLogo}</g><path d="M2 22c0-6 8-17 19-20" stroke="#f0f0f0" strokeWidth="1.500" fill="none" /></> },
  { name: 'swirl', run: false, art: <path d="M21 5c-3 2-5-1-9-1-5 0-9 4-9 8 0 5 4 9 9 8 4 0 7-3 7-7 0-3-3-5-6-5s-5 3-4 5c0 2 3 4 5 2 2-1 1-3-1-3M21 5c0 3-2 4-5 3" fill="none" stroke="#ececec" strokeWidth="1.500" /> },
  { name: 'edge', run: false, art: <g fill="#0f7ad6">{eLogo}</g> },
  { name: 'ie', run: false, art: <><g fill="#3ea6ee">{eLogo}</g><path d="M3 23C-2 18 14 0 22 2c2 1 1 4 0 6" stroke="#f5cf2e" strokeWidth="2" fill="none" /></> },
  { name: 'files', run: true, art: <><path d="M2 4h8l2 2h10v16H2z" fill="#ffe59a" /><path d="M6 22v-8h12v8h-4v-3h-4v3z" fill="#37aee2" /></> },
  { name: 'notes', run: true, art: <><rect width="24" height="24" rx="2" fill="#f79a1c" /><path d="M3 8l12-3 3 13-12 3z" fill="#fff" /><path d="M6 11l8-2M7 14l8-2M8 17l6-1" stroke="#888" /><path d="M21 2l-6 13" stroke="#a84312" strokeWidth="2.500" /></> },
  { name: 'ggj', run: true, active: true, art: <svg width="24" height="24" viewBox="0 0 16 16" fill="none">{ICONS.app}</svg> },
  { name: 'swirl2', run: true, art: <path d="M24 1c-1 6-5 7-9 6-5-1-8 3-6 7 2 3 7 3 8 0 1-2-1-4-3-2 1-4 8-3 9 2 1 6-5 10-11 10C3 24-1 17 1 10 3 3 11 0 17 3c3 1 5 0 7-2z" fill="#1f9df1" /> },
  { name: 'green', run: true, art: <><circle cx="12" cy="13" r="10" fill="#5cc024" stroke="#e5f5d8" strokeWidth="1.500" /><g fill="#fff" transform="translate(4 5) scale(.65)">{eLogo}</g><path d="M4 22C6 10 14 3 22 3" stroke="#35961a" strokeWidth="2" fill="none" /></> },
]

function Taskbar() {
  return (
    <div className="flex h-10 shrink-0 items-stretch bg-[#020b10] text-white">
      <button type="button" aria-label="开始" className="grid w-12 place-items-center bg-black">
        <svg viewBox="0 0 16 16" className="h-4 w-4" fill="#fff"><path d="M0 2.300l6.500-1v6.200H0zM7.500 1.200L16 0v7.500H7.500zM0 8.500h6.500v6.200L0 13.700zM7.500 8.500H16V16l-8.500-1.200z" /></svg>
      </button>
      <label className="flex w-[344px] items-center bg-[#333] pr-3 pl-[9px]">
        <span className="h-[22px] w-[22px] shrink-0 rounded-full border-[3px] border-white" />
        <input placeholder="在这里输入你要搜索的内容" aria-label="搜索" className="ml-[5px] w-0 flex-1 bg-transparent text-sm placeholder:text-[#a0a0a0]" />
        <Mic size={17} strokeWidth={1.5} className="text-[#b0b0b0]" />
      </label>
      <button type="button" aria-label="任务视图" className="grid w-12 place-items-center">
        <svg viewBox="0 0 20 14" className="h-3.5 w-5" fill="none" stroke="#fff"><path d="M4.500.5h11v13h-11zM2.500 2.500h-2v9h2M17.500 2.500h2v9h-2" /></svg>
      </button>
      <div className="flex gap-0.5 pl-[2px]">
        {APPS.map((a) => (
          <button
            key={a.name}
            type="button"
            aria-label={a.name}
            className={`flex w-12 flex-col items-center justify-center border-b-2 pt-0.5 ${a.active ? 'bg-[#343d41]' : ''} ${a.run ? 'border-[#76b9ed]' : 'border-transparent'}`}
          >
            <svg viewBox="0 0 24 24" className="h-6 w-6">{a.art}</svg>
          </button>
        ))}
      </div>
      <div className="ml-auto flex items-center">
        <span className="text-xs text-[#d8d8d8]">链接</span>
        <span className="ml-5 text-center text-xs leading-4">22%<br />CPU使用</span>
        <ChevronUp size={20} strokeWidth={1.5} className="ml-4" />
        <BatteryCharging size={16} strokeWidth={1.5} className="ml-1.5 fill-current" />
        <Wifi size={16} strokeWidth={1.5} className="ml-2" />
        <Volume2 size={17} strokeWidth={1.5} className="ml-1.5" />
        <svg viewBox="0 0 23 14" className="ml-[9px] h-3.5 w-[23px]" fill="none" stroke="#fff" aria-hidden>
          <path d="M.5.500h22v13H.500z" />
          <path d="M3 4h17M3 7h17" strokeDasharray="1.500 1.500" />
          <path d="M3 10.500h2M7 10.500h9M18 10.500h2" />
        </svg>
        <span className="ml-2.5 text-xs">中</span>
        <span className="ml-4 grid h-4 w-4 -rotate-6 place-items-center rounded-xs bg-[#f04e1e] text-sm leading-4 font-bold">S</span>
        <span className="ml-3 w-[66px] text-center text-xs leading-[18px]">17:00<br />2018/4/25</span>
        <span className="relative ml-4 w-10">
          <svg viewBox="0 0 16 16" className="h-4 w-4" fill="#fff"><path d="M0 0h16v12H8l-3 4v-4H0z" /><path d="M3 3h10M3 6h10M3 9h6" stroke="#000" /></svg>
          <span className="absolute top-1.5 left-2 grid h-4 w-4 place-items-center rounded-full border border-[#888] bg-[#222] text-xs leading-3 font-bold">1</span>
        </span>
      </div>
    </div>
  )
}

/* ---------- floating pieces ---------- */

function InputMethodBar() {
  return (
    <div className="absolute top-0 left-[702px] flex h-[27px] items-center">
      <span className="z-10 grid h-[25px] w-[26px] -rotate-6 place-items-center rounded-sm bg-[#ee4b1c] text-2xl leading-6 font-bold text-white">S</span>
      <div className="-ml-1 flex h-6 w-[184px] items-center justify-between self-end border border-[#b4c6da] bg-white pr-[3px] pl-[11px] text-[#1f70c8]">
        <span className="text-sm leading-5 font-bold">英</span>
        <span className="text-sm leading-5 font-bold">•,</span>
        <Smile size={17} />
        <Mic size={17} className="fill-current" />
        <Keyboard size={18} />
        <UserRound size={16} className="fill-current text-[#a9b7cc]" />
        <Shirt size={16} className="fill-current" />
        <Wrench size={15} className="fill-current" />
      </div>
    </div>
  )
}

export default function App() {
  return (
    <div className="[font-family:'Open_Sans','Noto_Sans_CJK_SC',sans-serif] relative flex h-screen flex-col overflow-hidden bg-[#f0f0f0] text-xs leading-4 text-black">
      <TitleBar />
      <MenuBar />
      <MainToolbar />
      <main className="flex min-h-0 flex-1">
        <NavPanel />
        <div className="ml-1 flex min-w-0 flex-1 flex-col">
          <PartToolbar />
          <div className="flex min-h-0 flex-1 pt-px">
            <PartList />
            <PropertyPanel />
          </div>
        </div>
      </main>
      <StatusBar />
      <Taskbar />

      <GridDialog />
      <InputMethodBar />
      <span className="absolute -top-7 right-[278px] flex h-[47px] w-[47px] items-end justify-center rounded-full border-2 border-[#d0d0d0] bg-[#35b558] pb-[3px] font-bold text-white shadow-md">63</span>

      {/* callouts */}
      <span className="pointer-events-none absolute top-[235px] left-[161px] h-[42px] w-[152px] border-3 border-[#f00]" />
      <span className="pointer-events-none absolute top-[161px] left-[408px] h-[51px] w-[169px] border-3 border-[#f00]" />
    </div>
  )
}
